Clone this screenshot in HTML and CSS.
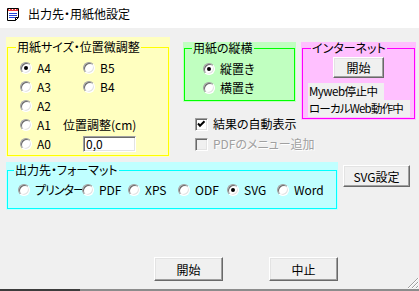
FILE: index.html
```html
<!DOCTYPE html>
<html lang="ja">
<head>
    <meta charset="UTF-8">
    <meta name="viewport" content="width=device-width, initial-scale=1.0">
    <title>出力先・用紙他設定</title>
    <link rel="stylesheet" href="styles.css">
</head>
<body>

    <div class="titlebar">
        <svg class="app-icon" width="15" height="15" viewBox="0 0 15 15">
            <path d="M1.5 1.5h11v9l-3 3h-8z" fill="#fff" stroke="#000"/>
            <rect x="2" y="2" width="10" height="2" fill="#e83a3a"/>
            <path d="M3 2.5h1M6 2.5h1M9 2.5h1" stroke="#fff"/>
            <path d="M3 6.5h8M3 8.5h8M3 10.5h6" stroke="#2344d8"/>
            <path d="M9.5 13.5v-3h3" fill="none" stroke="#000"/>
        </svg>
        <span class="title">出力先・用紙他設定</span>
    </div>

    <div class="dialog">
        <div class="top-row">
            <!-- paper size -->
            <div class="group group-yellow">
                <fieldset>
                    <legend>用紙サイズ・位置微調整</legend>
                    <div class="size-rows">
                        <div class="row">
                            <label class="opt col-a"><span class="radio on"></span>A4</label>
                            <label class="opt"><span class="radio"></span>B5</label>
                        </div>
                        <div class="row">
                            <label class="opt col-a"><span class="radio"></span>A3</label>
                            <label class="opt"><span class="radio"></span>B4</label>
                        </div>
                        <div class="row">
                            <label class="opt col-a"><span class="radio"></span>A2</label>
                        </div>
                        <div class="row">
                            <label class="opt col-short"><span class="radio"></span>A1</label>
                            <span class="offset-label">位置調整(cm)</span>
                        </div>
                        <div class="row">
                            <label class="opt col-a"><span class="radio"></span>A0</label>
                            <input class="offset" type="text" value="0,0">
                        </div>
                    </div>
                </fieldset>
            </div>

            <div class="right-block">
                <div class="sub-col">
                    <div class="group group-green">
                        <fieldset>
                            <legend>用紙の縦横</legend>
                            <div class="orient-rows">
                                <label class="opt"><span class="radio on"></span>縦置き</label>
                                <label class="opt"><span class="radio"></span>横置き</label>
                            </div>
                        </fieldset>
                    </div>
                    <div class="checks">
                        <div class="check-row">
                            <span class="checkbox">
                                <svg width="9" height="9" viewBox="0 0 9 9"><path d="M1 3.5l2 2.2 4.5-4.5" fill="none" stroke="#000" stroke-width="2"/></svg>
                            </span>
                            結果の自動表示
                        </div>
                        <div class="check-row disabled">
                            <span class="checkbox off"></span>
                            PDFのメニュー追加
                        </div>
                    </div>
                </div>

                <div class="group group-pink">
                    <fieldset>
                        <legend>インターネット</legend>
                        <div class="net">
                            <button class="btn btn-net">開始</button>
                            <div class="status status-short">Myweb停止中</div>
                            <div class="status status-long">ローカルWeb動作中</div>
                        </div>
                    </fieldset>
                </div>
            </div>
        </div>

        <div class="format-row">
            <div class="group group-cyan">
                <fieldset>
                    <legend>出力先・フォーマット</legend>
                    <div class="formats">
                        <label class="opt tight"><span class="radio"></span>プリンター</label>
                        <label class="opt"><span class="radio"></span>PDF</label>
                        <label class="opt"><span class="radio"></span>XPS</label>
                        <label class="opt"><span class="radio"></span>ODF</label>
                        <label class="opt"><span class="radio on"></span>SVG</label>
                        <label class="opt"><span class="radio"></span>Word</label>
                    </div>
                </fieldset>
            </div>
            <button class="btn btn-svg">SVG設定</button>
        </div>

        <div class="actions">
            <button class="btn btn-main">開始</button>
            <button class="btn btn-main">中止</button>
            <svg class="grip" width="12" height="12" viewBox="0 0 12 12">
                <path d="M11 1L1 11M11 5L5 11M11 9L9 11" stroke="#a0a0a0"/>
                <path d="M12 1L1 12M12 5L5 12M12 9L9 12" stroke="#fff"/>
            </svg>
        </div>
    </div>

    <div class="bottom-edge"></div>

</body>
</html>
```

FILE: styles.css
```css
body {
    margin: 0;
    width: 419px;
    height: 291px;
    background-color: #f0f0f0;
    font-family: "Noto Sans CJK JP", sans-serif;
    font-size: 12px;
    font-feature-settings: "palt";
    color: #000;
    display: flex;
    flex-direction: column;
    overflow: hidden;
}
.titlebar {
    height: 28px;
    background-color: #fff;
    display: flex;
    align-items: center;
    padding-left: 6px;
    gap: 7px;
    flex: none;
}
.title {
    line-height: 14px;
}
.dialog {
    flex: 1;
    padding-left: 6px;
    display: flex;
    flex-direction: column;
}
.top-row {
    display: flex;
    align-items: flex-start;
    gap: 13px;
}
.right-block {
    display: flex;
    align-items: flex-start;
    gap: 5px;
    margin-top: 14px;
}
.sub-col {
    width: 113px;
    flex: none;
}

/* group boxes */
.group {
    display: flex;
    flex-direction: column;
    box-sizing: border-box;
    padding: 0 1px 1px 1px;
    flex: none;
}
.group fieldset {
    flex: 1;
    margin: 0;
    padding: 0;
    min-width: 0;
}
.group legend {
    font-size: 12px;
    line-height: 12px;
    padding: 0 1px;
}
.group-yellow {
    width: 164px;
    height: 120px;
    margin-top: 9px;
    padding-top: 4px;
    background-color: #ffffc0;
}
.group-yellow fieldset {
    border: 1px solid #ffff00;
}
.group-yellow legend {
    margin-left: 8px;
}
.group-green {
    width: 113px;
    height: 60px;
    background-color: #c0ffc0;
}
.group-green fieldset {
    border: 1px solid #00ff00;
}
.group-green legend {
    margin-left: 7px;
}
.group-pink {
    width: 115px;
    height: 78px;
    background-color: #ffc0ff;
}
.group-pink fieldset {
    border: 1px solid #ff00ff;
}
.group-pink legend {
    margin-left: 8px;
}
.group-cyan {
    width: 332px;
    height: 48px;
    padding-top: 2px;
    background-color: #c0ffff;
}
.group-cyan fieldset {
    border: 1px solid #00ffff;
}
.group-cyan legend {
    margin-left: 6px;
}

/* radio options */
.opt {
    display: flex;
    align-items: center;
    gap: 5px;
    height: 19px;
    line-height: 14px;
    white-space: nowrap;
}
.tight {
    letter-spacing: -1px;
}
.radio {
    width: 12px;
    height: 12px;
    box-sizing: border-box;
    border-radius: 50%;
    border: 1px solid;
    border-color: #a0a0a0 #fff #fff #a0a0a0;
    background-color: #fff;
    box-shadow: inset 1px 1px 0 #696969, inset -1px -1px 0 #e3e3e3;
    display: flex;
    align-items: center;
    justify-content: center;
    flex: none;
}
.radio.on::after {
    content: "";
    width: 4px;
    height: 4px;
    border-radius: 50%;
    background-color: #000;
}

.size-rows {
    padding: 5px 0 0 12px;
}
.row {
    display: flex;
    align-items: center;
    height: 19px;
}
.col-a {
    width: 63px;
}
.col-short {
    width: 43px;
}
.offset-label {
    white-space: nowrap;
    line-height: 14px;
}
.offset {
    width: 53px;
    height: 16px;
    box-sizing: border-box;
    border: 1px solid;
    border-color: #a0a0a0 #fff #fff #a0a0a0;
    box-shadow: inset 1px 1px 0 #696969, inset -1px -1px 0 #e3e3e3;
    background-color: #fff;
    font-family: inherit;
    font-size: 12px;
    padding: 0 2px;
    margin: 0;
    outline: none;
}

.orient-rows {
    padding: 5px 0 0 18px;
}

.net {
    padding-top: 3px;
    display: flex;
    flex-direction: column;
    align-items: flex-start;
}
.status {
    margin-left: 5px;
    height: 17px;
    line-height: 17px;
    padding-left: 1px;
    box-sizing: border-box;
    background-color: #f0f0f0;
    white-space: nowrap;
    font-size: 11.5px;
    letter-spacing: -0.5px;
}
.status-short {
    width: 76px;
}
.status-long {
    width: 102px;
    letter-spacing: -0.8px;
}

/* checkboxes */
.checks {
    margin-top: 12px;
    padding-left: 12px;
}
.check-row {
    display: flex;
    align-items: center;
    gap: 5px;
    height: 20px;
    line-height: 14px;
    white-space: nowrap;
}
.checkbox {
    width: 13px;
    height: 13px;
    box-sizing: border-box;
    border: 1px solid;
    border-color: #a0a0a0 #fff #fff #a0a0a0;
    box-shadow: inset 1px 1px 0 #696969, inset -1px -1px 0 #e3e3e3;
    background-color: #fff;
    display: flex;
    align-items: center;
    justify-content: center;
    flex: none;
}
.checkbox.off {
    background-color: #f0f0f0;
}
.disabled {
    color: #a0a0a0;
    text-shadow: 1px 1px 0 #fff;
}

.format-row {
    display: flex;
    align-items: flex-start;
    gap: 5px;
    margin-top: 5px;
}
.formats {
    display: grid;
    grid-template-columns: 64px 46px 50px 49px 50px auto;
    padding: 4px 0 0 10px;
}

/* buttons */
.btn {
    font-family: inherit;
    font-size: 12px;
    color: #000;
    background-color: #f0f0f0;
    border: 1px solid;
    border-color: #fff #696969 #696969 #fff;
    box-shadow: inset -1px -1px 0 #a0a0a0, inset 1px 1px 0 #e3e3e3;
    padding: 0;
    margin: 0;
}
.btn-net {
    width: 51px;
    height: 21px;
    align-self: center;
    margin-bottom: 5px;
}
.btn-svg {
    width: 67px;
    height: 22px;
    margin-top: 3px;
}
.btn-main {
    width: 69px;
    height: 24px;
}
.actions {
    display: flex;
    align-items: flex-start;
    gap: 46px;
    margin-top: 47px;
    padding-left: 148px;
    height: 32px;
}
.grip {
    margin-left: auto;
    align-self: flex-end;
}
.bottom-edge {
    height: 2px;
    flex: none;
    background: linear-gradient(to right, #3c3c3c 80px, #8c8c8c 80px);
}
```
